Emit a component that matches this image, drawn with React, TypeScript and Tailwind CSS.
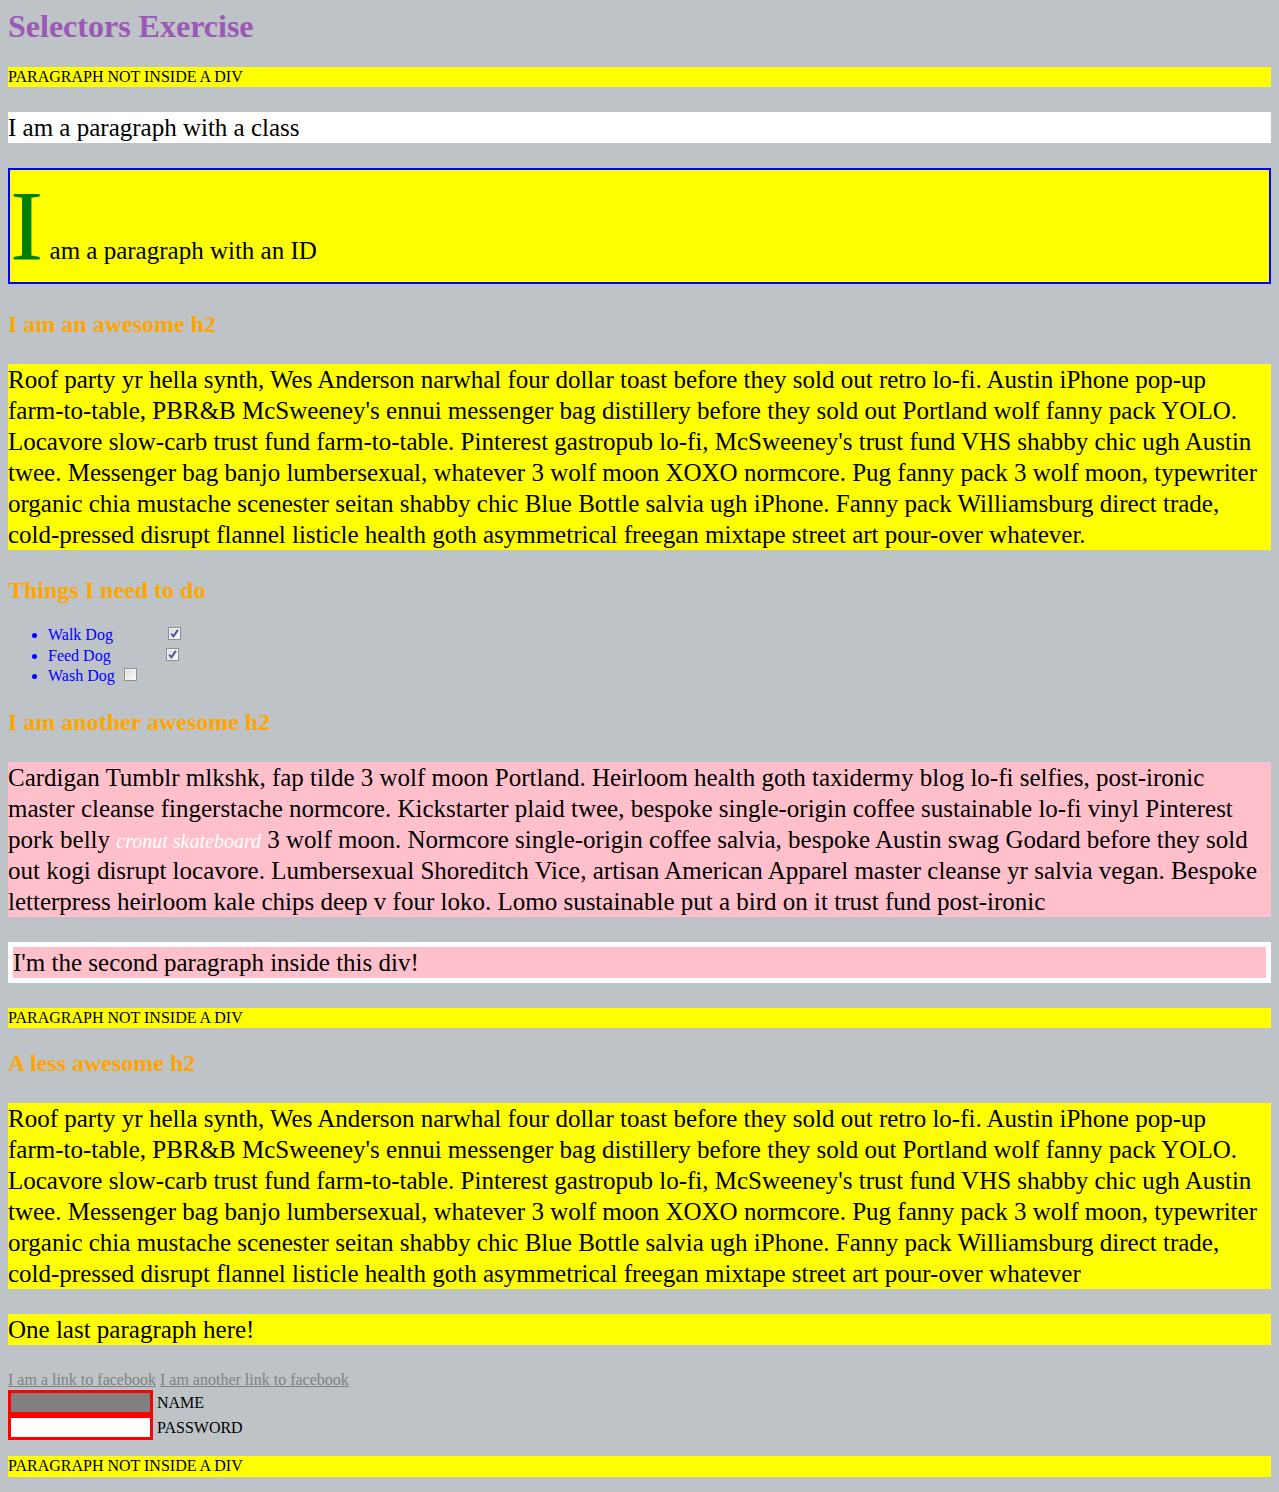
import React from "react";

const roofLines = [
  "Roof party yr hella synth, Wes Anderson narwhal four dollar toast before they sold out retro lo-fi. Austin iPhone pop-up",
  "farm-to-table, PBR&B McSweeney's ennui messenger bag distillery before they sold out Portland wolf fanny pack YOLO.",
  "Locavore slow-carb trust fund farm-to-table. Pinterest gastropub lo-fi, McSweeney's trust fund VHS shabby chic ugh Austin",
  "twee. Messenger bag banjo lumbersexual, whatever 3 wolf moon XOXO normcore. Pug fanny pack 3 wolf moon, typewriter",
  "organic chia mustache scenester seitan shabby chic Blue Bottle salvia ugh iPhone. Fanny pack Williamsburg direct trade,",
  "cold-pressed disrupt flannel listicle health goth asymmetrical freegan mixtape street art pour-over whatever",
];

const Roof: React.FC<{ end?: string }> = ({ end = "" }) => (
  <>
    {roofLines.map((line, i) => (
      <React.Fragment key={i}>
        {line}
        {i < roofLines.length - 1 ? <br /> : end}
      </React.Fragment>
    ))}
  </>
);

const Checkbox: React.FC<{ checked?: boolean; className?: string }> = ({ checked, className }) => (
  <svg width="13" height="13" viewBox="0 0 13 13" className={`inline-block align-baseline ${className ?? ""}`}>
    <defs>
      <linearGradient id={checked ? "cbg1" : "cbg0"} x1="0" y1="0" x2="1" y2="1">
        <stop offset="0" stopColor="#dcdcdc" />
        <stop offset="1" stopColor="#fafafa" />
      </linearGradient>
    </defs>
    <rect x="0" y="0" width="13" height="13" fill="#8f8f8f" />
    <rect x="1" y="1" width="11" height="11" fill="#f4f4f4" />
    <rect x="2" y="2" width="9" height="9" fill={`url(#${checked ? "cbg1" : "cbg0"})`} />
    {checked && (
      <path d="M3.2 6.6 L5.5 9.4 L9.9 2.9" fill="none" stroke="#4b5b9c" strokeWidth="2" />
    )}
  </svg>
);

const NotInDiv: React.FC<{ className?: string }> = ({ className }) => (
  <p className={`bg-[#ffff00] text-[16px] leading-[20.6px] ${className ?? ""}`}>PARAGRAPH NOT INSIDE A DIV</p>
);

const H2: React.FC<{ children: React.ReactNode; className?: string }> = ({ children, className }) => (
  <h2 className={`text-[24px] font-bold leading-[30px] text-[#ffa500] ${className ?? ""}`}>{children}</h2>
);

export default function App() {
  return (
    <div className="min-h-screen bg-[#bdc3c7] px-2 pt-2 pb-4 font-['Liberation_Serif','Times_New_Roman',serif] text-black">
      <h1 className="text-[32px] font-bold leading-[37px] text-[#9b59b6]">Selectors Exercise</h1>

      <NotInDiv className="mt-[21.5px]" />

      <p className="mt-[25px] bg-white text-[25px] leading-[31px]">I am a paragraph with a class</p>

      <p className="mt-[25px] border-2 border-[#0000ff] bg-[#ffff00] text-[25px] leading-[31px]">
        <span className="text-[100px] leading-[112px] text-[#008000]">I</span> am a paragraph with an ID
      </p>

      <H2 className="mt-[25px]">I am an awesome h2</H2>

      <p className="mt-[25px] bg-[#ffff00] text-[25px] leading-[31px]">
        <Roof end="." />
      </p>

      <H2 className="mt-[25px]">Things I need to do</H2>

      <ul className="mt-[20px] list-disc pl-10 text-[16px] leading-[20.5px] text-[#0000ff]">
        <li>
          Walk Dog<Checkbox checked className="ml-[55px]" />
        </li>
        <li>
          Feed Dog<Checkbox checked className="ml-[55px]" />
        </li>
        <li>
          Wash Dog<Checkbox className="ml-[9px]" />
        </li>
      </ul>

      <H2 className="mt-[20px]">I am another awesome h2</H2>

      <p className="mt-[25px] bg-[#ffc0cb] text-[25px] leading-[31px]">
        Cardigan Tumblr mlkshk, fap tilde 3 wolf moon Portland. Heirloom health goth taxidermy blog lo-fi selfies,
        post-ironic master cleanse fingerstache normcore. Kickstarter plaid twee, bespoke single-origin coffee
        sustainable lo-fi vinyl Pinterest pork belly{" "}
        <span className="text-[20px] leading-none italic text-white">cronut skateboard</span> 3 wolf moon. Normcore
        single-origin coffee salvia, bespoke Austin swag Godard before they sold out kogi disrupt locavore.
        Lumbersexual Shoreditch Vice, artisan American Apparel master cleanse yr salvia vegan. Bespoke letterpress
        heirloom kale chips deep v four loko. Lomo sustainable put a bird on it trust fund post-ironic
      </p>

      <div className="mt-[25px] border-[5px] border-white">
        <p className="bg-[#ffc0cb] text-[25px] leading-[31px]">I'm the second paragraph inside this div!</p>
      </div>

      <NotInDiv className="mt-[25px]" />

      <H2 className="mt-[20px]">A less awesome h2</H2>

      <p className="mt-[25px] bg-[#ffff00] text-[25px] leading-[31px]">
        <Roof />
      </p>

      <p className="mt-[25px] bg-[#ffff00] text-[25px] leading-[31px]">One last paragraph here!</p>

      <div className="mt-[25px] text-[16px] leading-[20px] text-[#808080]">
        <a href="#" className="underline">
          I am a link to facebook
        </a>{" "}
        <a href="#" className="underline">
          I am another link to facebook
        </a>
      </div>

      <form className="text-[16px]">
        <div className="flex h-[25px] items-center">
          <input
            type="text"
            readOnly
            className="h-[25px] w-[145px] border-[3px] border-[#ff0000] bg-[#808080] outline-none"
          />
          <span className="ml-[4px]">NAME</span>
        </div>
        <div className="flex h-[25px] items-center">
          <input
            type="password"
            readOnly
            className="h-[25px] w-[145px] border-[3px] border-[#ff0000] bg-white outline-none"
          />
          <span className="ml-[4px]">PASSWORD</span>
        </div>
      </form>

      <NotInDiv className="mt-[16px]" />
    </div>
  );
}
